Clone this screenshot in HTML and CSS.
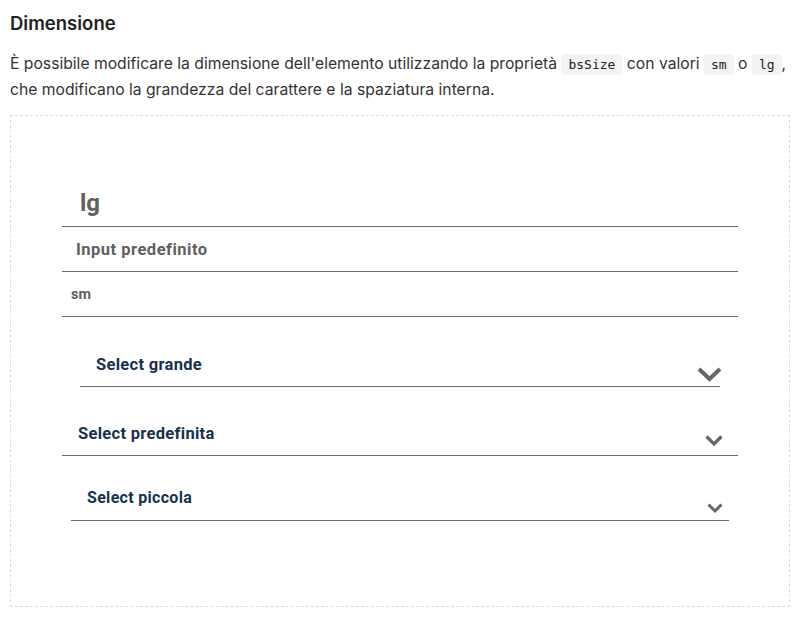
FILE: index.html
```html
<!DOCTYPE html>
<html lang="it">
<head>
<meta charset="utf-8">
<title>Dimensione</title>
<link rel="stylesheet" href="styles.css">
</head>
<body>
<section class="page">
  <h3 class="title">Dimensione</h3>
  <p class="intro">È possibile modificare la dimensione dell'elemento utilizzando la proprietà <code>bsSize</code> con valori <code>sm</code> o <code>lg</code>, che modificano la grandezza del carattere e la spaziatura interna.</p>
  <div class="demo">
    <div class="field field-lg">lg</div>
    <div class="field field-md">Input predefinito</div>
    <div class="field field-sm">sm</div>

    <div class="select select-lg">
      <span class="select-label">Select grande</span>
      <svg class="chev" width="25" height="15" viewBox="0 0 25 15"><path d="M2 2 L12.5 12 L23 2" fill="none" stroke="#666" stroke-width="4"/></svg>
    </div>
    <div class="select select-md">
      <span class="select-label">Select predefinita</span>
      <svg class="chev" width="18" height="12" viewBox="0 0 18 12"><path d="M1.5 1.5 L9 9 L16.5 1.5" fill="none" stroke="#666" stroke-width="3.2"/></svg>
    </div>
    <div class="select select-sm">
      <span class="select-label">Select piccola</span>
      <svg class="chev" width="16" height="11" viewBox="0 0 16 11"><path d="M1.5 1.5 L8 8 L14.5 1.5" fill="none" stroke="#666" stroke-width="3"/></svg>
    </div>
  </div>
</section>
</body>
</html>
```
FILE: styles.css
```css
html, body {
  margin: 0;
  padding: 0;
  background: #fff;
}

.page {
  padding: 0 10px;
  font-family: Inter, "Noto Sans", sans-serif;
  color: #333;
}

.title {
  margin: 0;
  padding-top: 11px;
  font-size: 18.5px;
  line-height: 24px;
  font-weight: 600;
  color: #222;
}

.intro {
  margin: 16px 0 0;
  font-size: 15.7px;
  line-height: 25px;
  color: #333;
}

.intro code {
  font-family: "DejaVu Sans Mono", monospace;
  font-size: 13px;
  background: #f3f3f3;
  border-radius: 3px;
  padding: 3px 7px;
  color: #222;
}

.demo {
  margin-top: 13px;
  border: 1px dashed #dcdcdc;
  height: 492px;
  box-sizing: border-box;
  padding: 59px 51px 0;
  display: flex;
  flex-direction: column;
  font-family: Roboto, sans-serif;
  font-weight: 700;
  font-variant-ligatures: none;
}

.field {
  border-bottom: 1px solid #5c6f82;
  color: #606060;
  display: flex;
  align-items: center;
  box-sizing: border-box;
  flex: none;
}

.field-lg {
  height: 52px;
  font-size: 24px;
  padding-left: 18px;
  padding-top: 4px;
}

.field-md {
  height: 45px;
  font-size: 16.5px;
  letter-spacing: 0.5px;
  padding-left: 14px;
}

.field-sm {
  height: 45px;
  font-size: 14.5px;
  padding-left: 9px;
}

.select {
  border-bottom: 1px solid #5c6f82;
  color: #17324d;
  display: flex;
  justify-content: space-between;
  box-sizing: border-box;
  flex: none;
  letter-spacing: 0.3px;
}

.select-label {
  display: block;
}

.chev {
  display: block;
}

.select-lg {
  margin: 26px 18px 0;
  height: 44px;
  font-size: 16.5px;
  padding-left: 16px;
  padding-top: 12px;
}

.select-lg .chev {
  margin-top: 12px;
  margin-right: -2px;
}

.select-md {
  margin: 29px 0 0;
  height: 40px;
  font-size: 16.5px;
  padding-left: 16px;
  padding-top: 8px;
}

.select-md .chev {
  margin-top: 11px;
  margin-right: 15px;
}

.select-sm {
  margin: 29px 9px 0;
  height: 36px;
  font-size: 16px;
  padding-left: 16px;
  padding-top: 3px;
}

.select-sm .chev {
  margin-top: 15px;
  margin-right: 6px;
}
```
